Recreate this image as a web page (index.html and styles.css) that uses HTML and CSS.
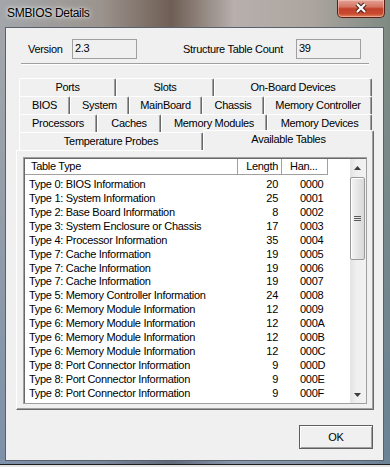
FILE: index.html
```html
<!DOCTYPE html>
<html lang="en">
<head>
    <meta charset="UTF-8">
    <meta name="viewport" content="width=device-width, initial-scale=1.0">
    <title>SMBIOS Details</title>
    <link rel="stylesheet" href="styles.css">
</head>
<body>
    <div class="window">
        <div class="titlebar">
            <div class="title">SMBIOS Details</div>
            <div class="close-btn">
                <svg width="14" height="12" viewBox="0 0 14 12">
                    <path d="M3 2 L11 10 M11 2 L3 10" stroke="#4a2620" stroke-width="4.4" fill="none"/>
                    <path d="M3 2 L11 10 M11 2 L3 10" stroke="#ffffff" stroke-width="2.2" fill="none"/>
                </svg>
            </div>
        </div>

        <div class="client">
            <div class="info-row">
                <span class="label version-label">Version</span>
                <div class="field">2.3</div>
                <span class="label count-label">Structure Table Count</span>
                <div class="field">39</div>
            </div>

            <div class="separator"></div>

            <div class="tabs">
                <div class="tab-row">
                    <div class="tab tab-ports">Ports</div>
                    <div class="tab tab-slots">Slots</div>
                    <div class="tab tab-onboard">On-Board Devices</div>
                </div>
                <div class="tab-row">
                    <div class="tab tab-bios">BIOS</div>
                    <div class="tab tab-system">System</div>
                    <div class="tab tab-mainboard">MainBoard</div>
                    <div class="tab tab-chassis">Chassis</div>
                    <div class="tab tab-memctrl">Memory Controller</div>
                </div>
                <div class="tab-row">
                    <div class="tab tab-proc">Processors</div>
                    <div class="tab tab-caches">Caches</div>
                    <div class="tab tab-memmod">Memory Modules</div>
                    <div class="tab tab-memdev">Memory Devices</div>
                </div>
                <div class="tab-row last-row">
                    <div class="tab tab-temp">Temperature Probes</div>
                    <div class="tab tab-avail active">Available Tables</div>
                </div>
            </div>

            <div class="tab-panel">
                <div class="listview">
                    <div class="lv-main">
                        <div class="lv-header">
                            <div class="col-type">Table Type</div>
                            <div class="col-len">Length</div>
                            <div class="col-han">Han...</div>
                        </div>
                        <div class="lv-rows" id="rows"></div>
                    </div>
                    <div class="scrollbar">
                        <div class="sb-btn">
                            <svg width="7" height="4" viewBox="0 0 7 4"><polygon points="3.5,0 7,4 0,4" fill="#3c3c3c"/></svg>
                        </div>
                        <div class="sb-thumb">
                            <div class="grip"></div>
                            <div class="grip"></div>
                            <div class="grip"></div>
                        </div>
                        <div class="sb-track"></div>
                        <div class="sb-btn sb-down">
                            <svg width="7" height="4" viewBox="0 0 7 4"><polygon points="0,0 7,0 3.5,4" fill="#3c3c3c"/></svg>
                        </div>
                    </div>
                </div>
            </div>

            <div class="button-row">
                <button class="ok-btn">OK</button>
            </div>
        </div>
        <div class="bottom-strip"></div>
    </div>

    <script>
        const tables = [
            ['Type 0: BIOS Information', 20, '0000'],
            ['Type 1: System Information', 25, '0001'],
            ['Type 2: Base Board Information', 8, '0002'],
            ['Type 3: System Enclosure or Chassis', 17, '0003'],
            ['Type 4: Processor Information', 35, '0004'],
            ['Type 7: Cache Information', 19, '0005'],
            ['Type 7: Cache Information', 19, '0006'],
            ['Type 7: Cache Information', 19, '0007'],
            ['Type 5: Memory Controller Information', 24, '0008'],
            ['Type 6: Memory Module Information', 12, '0009'],
            ['Type 6: Memory Module Information', 12, '000A'],
            ['Type 6: Memory Module Information', 12, '000B'],
            ['Type 6: Memory Module Information', 12, '000C'],
            ['Type 8: Port Connector Information', 9, '000D'],
            ['Type 8: Port Connector Information', 9, '000E'],
            ['Type 8: Port Connector Information', 9, '000F']
        ];

        const rowsEl = document.getElementById('rows');
        tables.forEach(function(t) {
            const row = document.createElement('div');
            row.className = 'lv-row';
            row.innerHTML =
                '<div class="col-type">' + t[0] + '</div>' +
                '<div class="col-len">' + t[1] + '</div>' +
                '<div class="col-han">' + t[2] + '</div>';
            rowsEl.appendChild(row);
        });
    </script>
</body>
</html>
```

FILE: styles.css
```css
* {
    box-sizing: border-box;
}

body {
    margin: 0;
    width: 390px;
    height: 467px;
    overflow: hidden;
    font-family: "Liberation Sans", Arial, sans-serif;
    font-size: 11px;
    letter-spacing: -0.3px;
    color: #000;
    background:
        linear-gradient(180deg, rgba(80, 120, 170, 0) 0, rgba(80, 120, 170, 0) 40px, rgba(80, 120, 170, 0.45) 100%),
        linear-gradient(90deg, #a2a6aa 0%, #9b938d 26%, #6f5e54 44%, #b6afac 60%, #aca59f 80%, #7d8a82 100%);
}

.window {
    display: flex;
    flex-direction: column;
    height: 100%;
}

/* title bar */
.titlebar {
    height: 27px;
    display: flex;
    align-items: flex-start;
}

.title {
    margin: 6px 0 0 7px;
    font-size: 12px;
    line-height: 14px;
    letter-spacing: -0.3px;
    text-shadow: 0 0 6px rgba(255, 255, 255, 0.9), 0 0 3px rgba(255, 255, 255, 0.8);
}

.close-btn {
    margin-left: auto;
    margin-right: 5px;
    width: 48px;
    height: 18px;
    border: 1px solid #5a2018;
    border-top: none;
    border-radius: 0 0 5px 5px;
    background: linear-gradient(180deg, #e3a295 0%, #d57563 40%, #c2402a 52%, #c74a30 80%, #e0855c 100%);
    box-shadow: inset 0 0 0 1px rgba(255, 220, 210, 0.45);
    display: flex;
    justify-content: center;
    align-items: center;
    padding-bottom: 2px;
}

/* client area */
.client {
    margin: 0 6px 0 5px;
    height: 434px;
    border: 1px solid #57626e;
    background: #f0f0f0;
    display: flex;
    flex-direction: column;
}

.info-row {
    display: flex;
    align-items: center;
    height: 20px;
    margin-top: 11px;
    padding-left: 22px;
}

.label {
    flex: none;
}

.version-label {
    width: 44px;
}

.count-label {
    width: 113px;
    margin-left: 46px;
}

.field {
    width: 65px;
    height: 20px;
    border: 1px solid #a0a0a0;
    background: #f0f0f0;
    padding-left: 2px;
    line-height: 17px;
}

.separator {
    height: 2px;
    margin: 4px 14px 0 15px;
    border-top: 1px solid #a0a0a0;
    border-bottom: 1px solid #fff;
}

/* tabs */
.tabs {
    margin: 13px 0 0 13px;
}

.tab-row {
    display: flex;
    height: 18px;
}

.last-row {
    align-items: flex-end;
}

.tab {
    flex: none;
    height: 18px;
    background: #f0f0f0;
    border-top: 1px solid #fff;
    border-left: 1px solid #fff;
    border-right: 1px solid #696969;
    box-shadow: inset -1px 0 0 #a0a0a0;
    border-radius: 2px 2px 0 0;
    text-align: center;
    line-height: 16px;
    white-space: nowrap;
}

.tab.active {
    position: relative;
    z-index: 1;
    height: 21px;
    margin-bottom: -1px;
    line-height: 17px;
}

.tab-ports { width: 97px; }
.tab-slots { width: 98px; }
.tab-onboard { width: 158px; }
.tab-bios { width: 51px; }
.tab-system { width: 59px; }
.tab-mainboard { width: 73px; }
.tab-chassis { width: 62px; }
.tab-memctrl { width: 108px; }
.tab-proc { width: 78px; }
.tab-caches { width: 64px; }
.tab-memmod { width: 106px; }
.tab-memdev { width: 105px; }
.tab-temp { width: 184px; }
.tab-avail { width: 171px; }

.tab-panel {
    margin-left: 10px;
    width: 358px;
    height: 260px;
    border-top: 1px solid #fff;
    border-left: 1px solid #fff;
    border-right: 1px solid #696969;
    border-bottom: 1px solid #696969;
    box-shadow: inset -1px -1px 0 #a0a0a0;
    padding: 6px 6px 5px 6px;
}

/* list view */
.listview {
    display: flex;
    height: 247px;
    border: 1px solid #a0a0a0;
    padding: 1px 0 0 1px;
    background: #fff;
    box-shadow: inset 1px 1px 0 #696969;
}

.lv-main {
    flex: 1;
    overflow: hidden;
}

.lv-header {
    display: flex;
    height: 16px;
    line-height: 15px;
}

.lv-header > div {
    border-bottom: 1px solid #a0a0a0;
    border-right: 1px solid #a0a0a0;
}

.col-type {
    width: 213px;
    flex: none;
    padding-left: 4px;
    white-space: nowrap;
    overflow: hidden;
}

.col-len {
    width: 44px;
    flex: none;
    text-align: right;
    padding-right: 4px;
}

.col-han {
    width: 46px;
    flex: none;
    padding-left: 18px;
}

.lv-header .col-type {
    padding-left: 6px;
}

.lv-header .col-len {
    padding-right: 3px;
}

.lv-header .col-han {
    padding-left: 8px;
}

.lv-rows {
    padding-top: 2px;
}

.lv-row {
    display: flex;
    height: 13.93px;
    line-height: 14px;
}

/* scrollbar */
.scrollbar {
    width: 16px;
    flex: none;
    display: flex;
    flex-direction: column;
    background: linear-gradient(90deg, #e3e3e3, #efefef 40%, #f2f2f2);
}

.sb-btn {
    height: 18px;
    display: flex;
    justify-content: center;
    align-items: center;
    padding-right: 1px;
}

.sb-down {
    height: 17px;
}

.sb-thumb {
    height: 83px;
    width: 15px;
    border: 1px solid #9a9a9a;
    border-radius: 2px;
    background: linear-gradient(90deg, #f4f4f4, #e6e6e6 50%, #d9d9d9);
    box-shadow: inset 1px 1px 0 #fff;
    display: flex;
    flex-direction: column;
    justify-content: center;
    align-items: center;
    gap: 1px;
}

.grip {
    width: 7px;
    height: 1px;
    background: #5a5a5a;
}

.sb-track {
    flex: 1;
}

/* buttons */
.button-row {
    display: flex;
    justify-content: flex-end;
    margin-top: 15px;
    padding-right: 10px;
}

.ok-btn {
    width: 74px;
    height: 24px;
    font-family: "Liberation Sans", Arial, sans-serif;
    font-size: 11px;
    letter-spacing: -0.3px;
    color: #000;
    background: #f0f0f0;
    border: 1px solid #5e5e5e;
    box-shadow: inset 1px 1px 0 #fff, inset -1px -1px 0 #a0a0a0;
    padding: 0;
}

.bottom-strip {
    margin-top: auto;
    height: 3px;
    background: #e4e4e4;
    border-top: 1px solid #1e1e1e;
}
```
